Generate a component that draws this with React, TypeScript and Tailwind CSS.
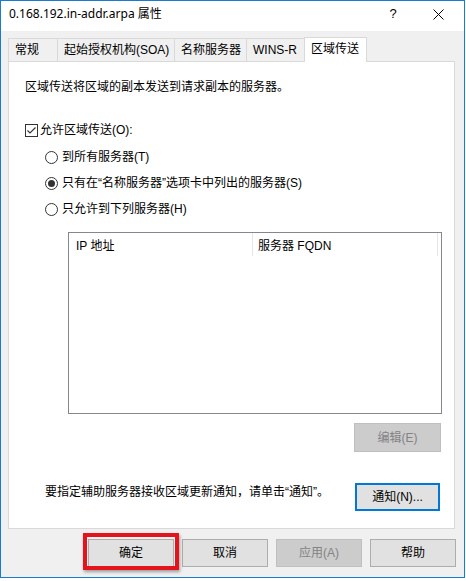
import React from 'react';

const font = { fontFamily: '"Liberation Sans", "Noto Sans CJK SC", sans-serif' };
const titleFont = { fontFamily: '"Noto Sans", "Noto Sans CJK SC", sans-serif' };

function Tab({ label, width, selected }: { label: string; width: string; selected?: boolean }) {
  if (selected) {
    return (
      <div className={`${width} h-[25px] -mb-px z-10 flex items-center pl-[6px] pb-[2px] bg-white border-l border-t border-r border-[#d9d9d9]`}>
        {label}
      </div>
    );
  }
  return (
    <div className={`${width} h-[23px] flex items-center pl-[6px] border-l border-t border-[#d9d9d9] bg-[#f0f0f0]`}>
      {label}
    </div>
  );
}

function Radio({ label, checked }: { label: string; checked?: boolean }) {
  return (
    <div className="flex items-center h-[16px] pl-[36px]">
      <span className="w-[13px] h-[13px] rounded-full border border-[#333333] bg-white flex items-center justify-center">
        {checked && <span className="w-[7px] h-[7px] rounded-full bg-[#333333]" />}
      </span>
      <span className="ml-[4px]">{label}</span>
    </div>
  );
}

function Button({ label, disabled, focused }: { label: string; disabled?: boolean; focused?: boolean }) {
  if (disabled) {
    return (
      <div className="w-[86px] h-[28px] flex items-center justify-center bg-[#cccccc] border border-[#bfbfbf] text-[#838383]">
        {label}
      </div>
    );
  }
  return (
    <div
      className={`w-[86px] h-[28px] flex items-center justify-center bg-[#e1e1e1] ${
        focused ? 'border-2 border-[#0078d7]' : 'border border-[#adadad]'
      }`}
    >
      {label}
    </div>
  );
}

export default function App() {
  return (
    <div className="w-[466px] h-[581px] bg-white text-[12px] leading-[16px] text-black" style={font}>
      <div className="w-[465px] h-[578px] border border-[#1b7ad2] bg-[#f0f0f0] flex flex-col">
        {/* title bar */}
        <div className="h-[30px] bg-white flex items-start pt-[5px] pl-[8px]">
          <span className="flex-1" style={titleFont}>0.168.192.in-addr.arpa 属性</span>
          <span className="w-[12px] mr-[34px] text-center text-[13px]">?</span>
          <svg width="11" height="11" viewBox="0 0 11 11" className="mt-[3px] mr-[20px]">
            <path d="M0.5 0.5 L10.5 10.5 M10.5 0.5 L0.5 10.5" stroke="#000" strokeWidth="1" />
          </svg>
        </div>

        {/* tabs */}
        <div className="mt-[6px] ml-[7px] flex items-end h-[24px]">
          <Tab label="常规" width="w-[49px]" />
          <Tab label="起始授权机构(SOA)" width="w-[117px]" />
          <Tab label="名称服务器" width="w-[72px]" />
          <Tab label="WINS-R" width="w-[58px]" />
          <Tab label="区域传送" width="w-[63px]" selected />
        </div>

        {/* panel */}
        <div className="ml-[7px] w-[447px] h-[468px] bg-white border border-[#d9d9d9] flex flex-col">
          <div className="mt-[17px] pl-[16px]">区域传送将区域的副本发送到请求副本的服务器。</div>

          <div className="mt-[27px] pl-[16px] flex items-center h-[16px]">
            <svg width="13" height="13" viewBox="0 0 13 13">
              <rect x="0.5" y="0.5" width="12" height="12" fill="#fff" stroke="#333333" />
              <path d="M2.5 6.5 L5 9 L10.5 3.5" fill="none" stroke="#333333" strokeWidth="1.2" />
            </svg>
            <span className="ml-[2px]">允许区域传送(O):</span>
          </div>

          <div className="mt-[11px]">
            <Radio label="到所有服务器(T)" />
          </div>
          <div className="mt-[10px]">
            <Radio label="只有在“名称服务器”选项卡中列出的服务器(S)" checked />
          </div>
          <div className="mt-[10px]">
            <Radio label="只允许到下列服务器(H)" />
          </div>

          {/* list view */}
          <div className="mt-[15px] ml-[59px] w-[374px] h-[182px] border border-[#828790] bg-white">
            <div className="flex h-[23px]">
              <div className="w-[184px] pl-[7px] pt-[5px] border-r border-[#e5e5e5]">IP 地址</div>
              <div className="w-[185px] pl-[5px] pt-[5px] border-r border-[#e5e5e5]">服务器 FQDN</div>
            </div>
          </div>

          <div className="mt-[9px] ml-[345px] w-[87px] h-[29px] flex items-center justify-center bg-[#cccccc] border border-[#bfbfbf] text-[#838383]">
            编辑(E)
          </div>

          <div className="mt-[31px] flex items-start pl-[36px]">
            <span className="mt-[1px] flex-1">要指定辅助服务器接收区域更新通知，请单击“通知”。</span>
            <div className="mr-[14px] w-[85px]">
              <div className="w-[85px] h-[28px] flex items-center justify-center bg-[#e1e1e1] border-2 border-[#0078d7]">
                通知(N)...
              </div>
            </div>
          </div>
        </div>

        {/* bottom buttons */}
        <div className="mt-[10px] pl-[87px] flex gap-[8px]">
          <div className="relative">
            <Button label="确定" />
            <div className="absolute -left-[5px] -top-[6px] -right-[5px] -bottom-[3px] border-[4px] border-[#e3141b] shadow-[1px_2px_3px_rgba(0,0,0,0.35)]" />
          </div>
          <Button label="取消" />
          <Button label="应用(A)" disabled />
          <Button label="帮助" />
        </div>
      </div>
    </div>
  );
}
